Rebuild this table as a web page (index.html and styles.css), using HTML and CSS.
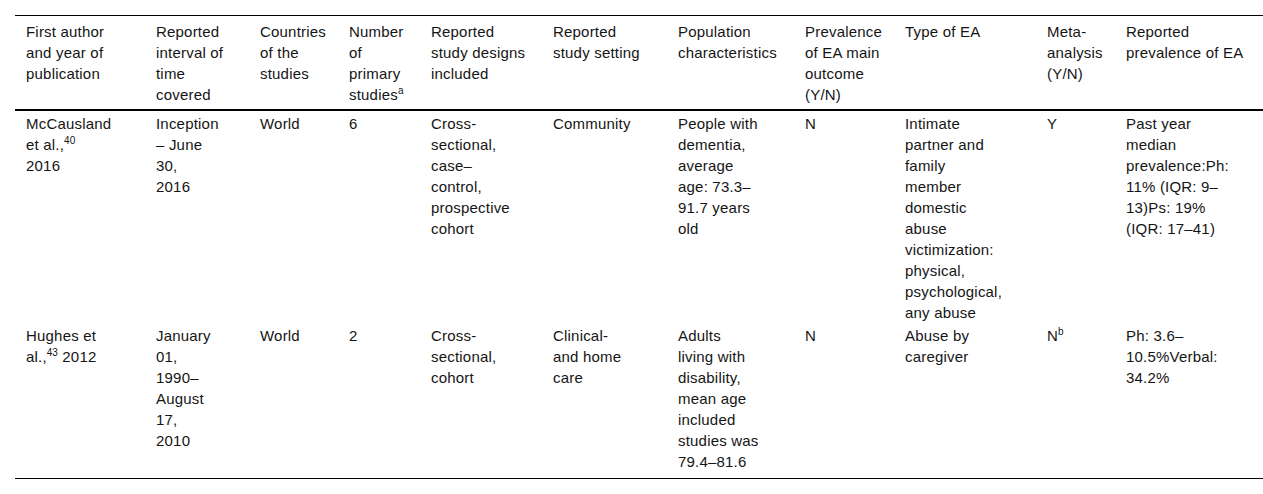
FILE: index.html
```html
<!DOCTYPE html>
<html lang="en">
<head>
<meta charset="utf-8">
<title>Table</title>
<link rel="stylesheet" href="styles.css">
</head>
<body>
<table class="data">
  <colgroup>
    <col class="c1"><col class="c2"><col class="c3"><col class="c4"><col class="c5"><col class="c6"><col class="c7"><col class="c8"><col class="c9"><col class="c10"><col class="c11">
  </colgroup>
  <thead>
    <tr>
      <th>First author<br>and year of<br>publication</th>
      <th>Reported<br>interval of<br>time<br>covered</th>
      <th>Countries<br>of the<br>studies</th>
      <th>Number<br>of<br>primary<br>studies<sup>a</sup></th>
      <th>Reported<br>study designs<br>included</th>
      <th>Reported<br>study setting</th>
      <th>Population<br>characteristics</th>
      <th>Prevalence<br>of EA main<br>outcome<br>(Y/N)</th>
      <th>Type of EA</th>
      <th>Meta-<br>analysis<br>(Y/N)</th>
      <th>Reported<br>prevalence of EA</th>
    </tr>
  </thead>
  <tbody>
    <tr>
      <td>McCausland<br>et al.,<sup>40</sup><br>2016</td>
      <td>Inception<br>– June<br>30,<br>2016</td>
      <td>World</td>
      <td>6</td>
      <td>Cross-<br>sectional,<br>case–<br>control,<br>prospective<br>cohort</td>
      <td>Community</td>
      <td>People with<br>dementia,<br>average<br>age: 73.3–<br>91.7 years<br>old</td>
      <td>N</td>
      <td>Intimate<br>partner and<br>family<br>member<br>domestic<br>abuse<br>victimization:<br>physical,<br>psychological,<br>any abuse</td>
      <td>Y</td>
      <td>Past year<br>median<br>prevalence:Ph:<br>11% (IQR: 9–<br>13)Ps: 19%<br>(IQR: 17–41)</td>
    </tr>
    <tr class="last">
      <td>Hughes et<br>al.,<sup>43</sup> 2012</td>
      <td>January<br>01,<br>1990–<br>August<br>17,<br>2010</td>
      <td>World</td>
      <td>2</td>
      <td>Cross-<br>sectional,<br>cohort</td>
      <td>Clinical-<br>and home<br>care</td>
      <td>Adults<br>living with<br>disability,<br>mean age<br>included<br>studies was<br>79.4–81.6</td>
      <td>N</td>
      <td>Abuse by<br>caregiver</td>
      <td>N<sup>b</sup></td>
      <td>Ph: 3.6–<br>10.5%Verbal:<br>34.2%</td>
    </tr>
  </tbody>
</table>
</body>
</html>
```

FILE: styles.css
```css
html, body {
  margin: 0;
  padding: 0;
  background: #ffffff;
}

body {
  padding: 15px 0 0 15px;
  font-family: "Liberation Sans", Arial, sans-serif;
  font-size: 15px;
  line-height: 21px;
  letter-spacing: 0.2px;
  color: #151515;
}

.data {
  border-collapse: collapse;
  table-layout: fixed;
  width: 1248px;
  border-top: 1px solid #000000;
  border-bottom: 1px solid #000000;
}

.c1 { width: 130px; }
.c2 { width: 104px; }
.c3 { width: 89px; }
.c4 { width: 82px; }
.c5 { width: 122px; }
.c6 { width: 125px; }
.c7 { width: 127px; }
.c8 { width: 100px; }
.c9 { width: 142px; }
.c10 { width: 79px; }
.c11 { width: 148px; }

.data th,
.data td {
  text-align: left;
  vertical-align: top;
  font-weight: normal;
  white-space: nowrap;
}

.data th {
  padding: 5px 2px 4px 11px;
  border-bottom: 2px solid #000000;
}

.data td {
  padding: 2px 2px 0 11px;
}

.data tr.last td {
  padding-bottom: 6px;
}

.data sup {
  font-size: 10px;
  letter-spacing: 0;
  line-height: 0;
  vertical-align: 6px;
}
```
